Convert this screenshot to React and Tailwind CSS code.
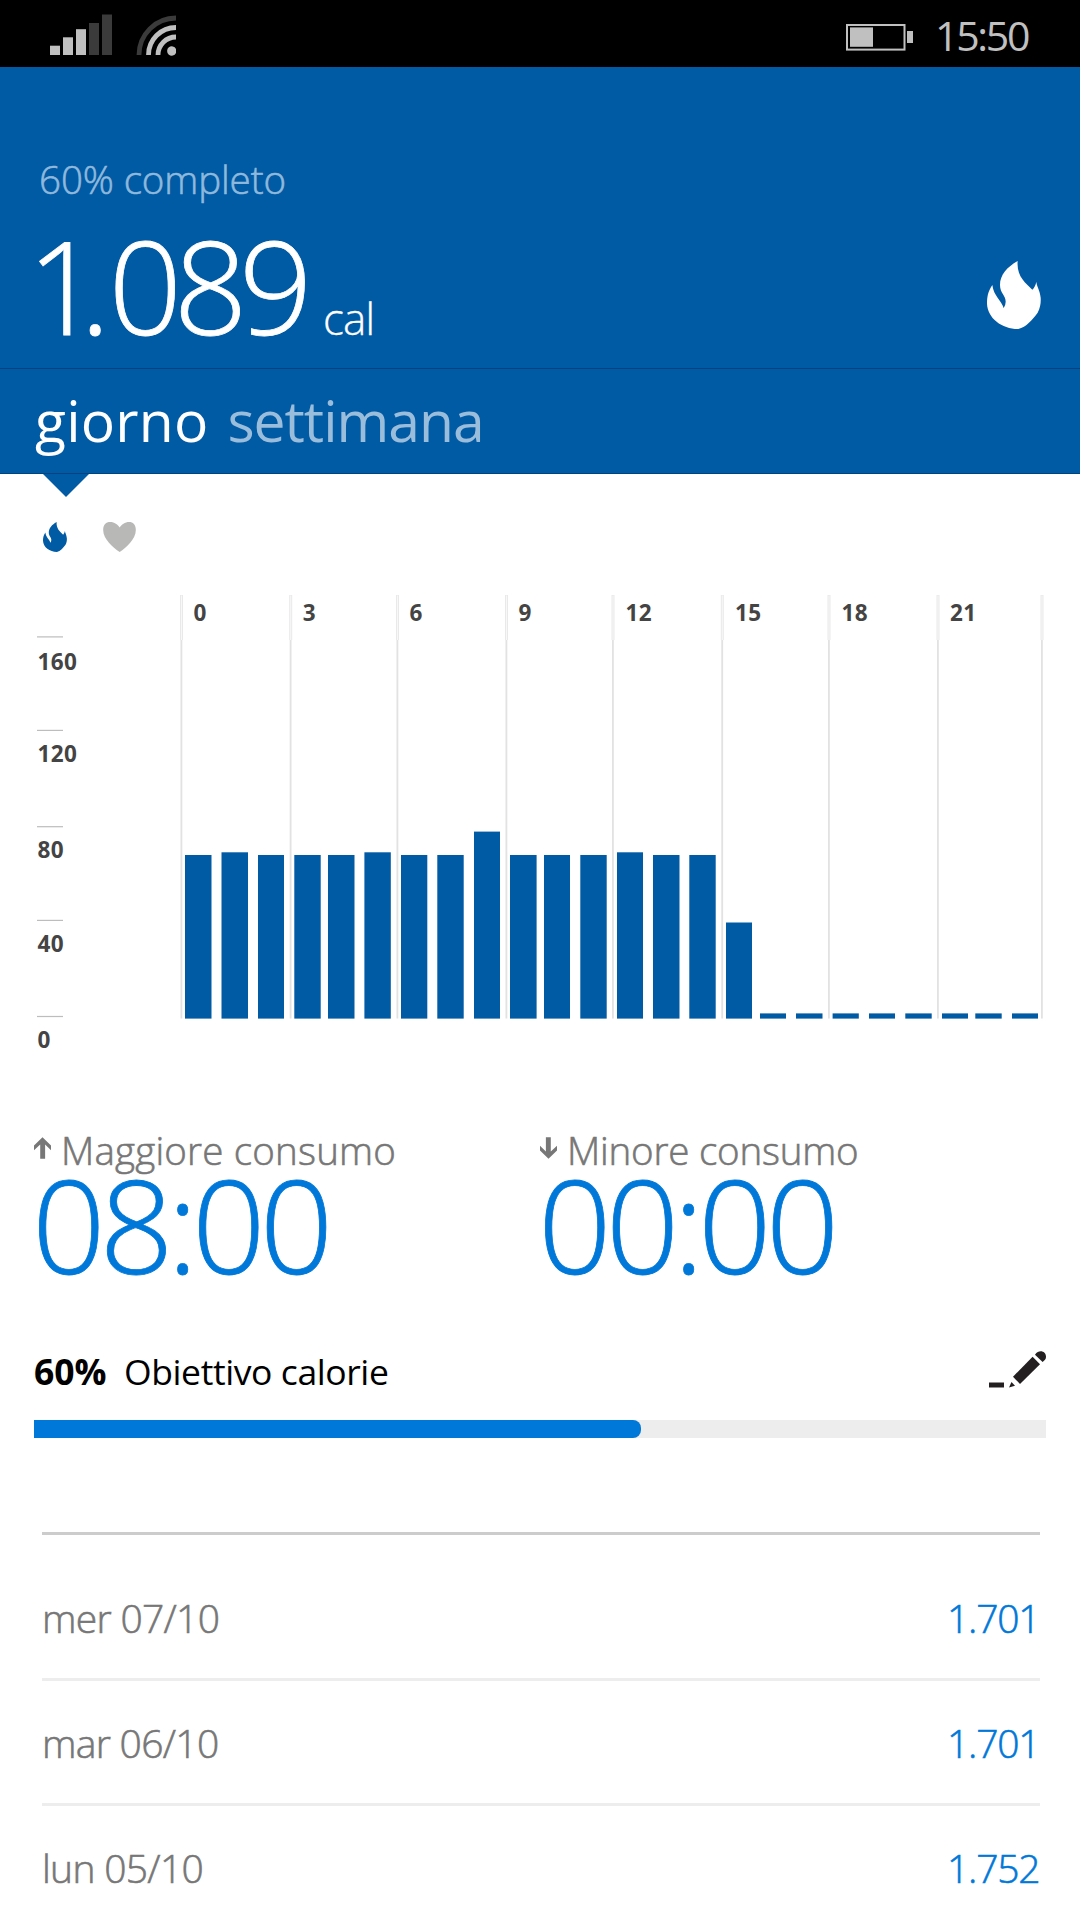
import React from "react";

const hours = [
  { x: 185, w: 26.5, top: 855 },
  { x: 221.5, w: 26.5, top: 852.3 },
  { x: 258, w: 26, top: 855 },
  { x: 294.3, w: 26.4, top: 855 },
  { x: 328, w: 26.5, top: 855 },
  { x: 364.4, w: 26.4, top: 852.3 },
  { x: 401, w: 26.3, top: 855 },
  { x: 437.3, w: 26.4, top: 855 },
  { x: 474, w: 26, top: 831.6 },
  { x: 510, w: 26.6, top: 855 },
  { x: 544, w: 26, top: 855 },
  { x: 580.3, w: 26.4, top: 855 },
  { x: 617, w: 26, top: 852.3 },
  { x: 653, w: 26.5, top: 855 },
  { x: 689.3, w: 26.4, top: 855 },
  { x: 726, w: 26, top: 922.5 },
  { x: 760, w: 26, top: 1013.4 },
  { x: 796, w: 26.5, top: 1013.4 },
  { x: 832.6, w: 26.2, top: 1013.4 },
  { x: 869, w: 26, top: 1013.4 },
  { x: 905.3, w: 26.4, top: 1013.4 },
  { x: 942, w: 26, top: 1013.4 },
  { x: 975.3, w: 26.4, top: 1013.4 },
  { x: 1012, w: 26, top: 1013.4 },
];

const gridLines = [
  { x: 180.5, label: "0", labelX: 193.5 },
  { x: 289.7, label: "3", labelX: 302.7 },
  { x: 396.5, label: "6", labelX: 409.5 },
  { x: 505.5, label: "9", labelX: 518.5 },
  { x: 612, label: "12", labelX: 625.5 },
  { x: 721.3, label: "15", labelX: 735 },
  { x: 828, label: "18", labelX: 841.5 },
  { x: 937, label: "21", labelX: 950 },
  { x: 1041, label: "", labelX: 1054 },
];

const ticks = [
  { label: "160", y: 636.8, baseline: 670 },
  { label: "120", y: 730.3, baseline: 762 },
  { label: "80", y: 826.6, baseline: 858 },
  { label: "40", y: 920.3, baseline: 952 },
  { label: "0", y: 1016.4, baseline: 1048 },
];

const history = [
  { day: "mer 07/10", value: "1.701" },
  { day: "mar 06/10", value: "1.701" },
  { day: "lun 05/10", value: "1.752" },
];

function Flame({ className }) {
  return (
    <svg
      viewBox="0 0 162 204"
      preserveAspectRatio="none"
      fill="currentColor"
      className={className}
    >
      <path d="M92 0C60 18 39 42 39 72C39 97 56 102 56 122Q56 132 50 141C43 118 20 105 16 72C2 92 0 110 0 128C2 172 45 204 94 204C118 198 136 176 152 155C160 140 162 125 161 110C159 88 149 76 148 62C146 72 142 80 136 86C115 65 88 45 92 0Z" />
    </svg>
  );
}

function Heart({ className }) {
  return (
    <svg viewBox="0 0 99 91" fill="currentColor" className={className}>
      <path d="M50 91C30 77 0 52 0 24C0 8 9 0 21 0C34 0 45 8 50 17C55 8 66 0 79 0C90 0 99 8 99 24C99 52 70 77 50 91Z" />
    </svg>
  );
}

function Arrow({ className }) {
  return (
    <svg viewBox="0 0 52 66" fill="currentColor" className={className}>
      <path d="M26 0L52 25V40L34 22V66H19V22L0 40V25Z" />
    </svg>
  );
}

function Pencil({ className }) {
  return (
    <svg viewBox="0 0 57 37" fill="currentColor" className={className}>
      <path d="M0 31.5H15V36.5H0Z" />
      <path d="M22.5 31L26 34.7L20 36.5Z" />
      <path d="M24 25.7L43.6 5.7L51 13.3L31 33Z" />
      <path d="M46 3.7C50-2 57 0 57 6C57 8 55.5 9.5 53.6 10.9Z" />
    </svg>
  );
}

function StatusBar() {
  return (
    <div className="flex h-[67px] items-start bg-black text-[#c0c0c0]">
      <svg width="130" height="67" className="ml-[50px]">
        <g fill="currentColor">
          <rect x="0" y="45.7" width="10" height="9.3" />
          <rect x="13" y="37.3" width="10" height="17.7" />
          <rect x="26" y="29.2" width="10" height="25.8" />
        </g>
        <g fill="#3b3b3b">
          <rect x="39" y="23" width="10" height="32" />
          <rect x="52" y="14.5" width="10" height="40.5" />
        </g>
        <g fill="none" strokeWidth="4.8">
          <path d="M89 55A37 37 0 0 1 126 18" stroke="#3b3b3b" />
          <path d="M98.5 55A27.5 27.5 0 0 1 126 27.5" stroke="currentColor" />
          <path d="M108 55A18 18 0 0 1 126 37" stroke="currentColor" />
        </g>
        <path
          d="M126 48.9A4.7 4.7 0 1 0 126 53.1Z"
          fill="currentColor"
        />
      </svg>
      <svg width="68" height="67" className="ml-auto">
        <rect
          x="1"
          y="25"
          width="57.5"
          height="24.6"
          fill="none"
          stroke="currentColor"
          strokeWidth="2"
        />
        <rect x="4" y="27.4" width="23" height="19.4" fill="currentColor" />
        <rect x="61" y="31" width="6" height="12" fill="currentColor" />
      </svg>
      <span className="mr-[52px] ml-[21px] w-[93px] text-[41px] leading-[71px] tracking-[-2.3px] whitespace-nowrap">
        15:50
      </span>
    </div>
  );
}

function Header() {
  return (
    <header className="bg-[#005aa4] text-white">
      <div className="flex h-[301px] justify-between">
        <div className="pl-[39px]">
          <p className="mt-[87px] text-[38.5px] leading-[50px] font-light tracking-[-0.1px] text-[#8fb9dc] [-webkit-text-stroke:0.6px_#8fb9dc]">
            60% completo
          </p>
          <p className="-ml-[12px] flex items-baseline pt-px whitespace-nowrap">
            <span className="w-[296px] text-[129px] leading-[160px] font-light tracking-[-8.3px] [-webkit-text-stroke:0.8px_white]">
              <span className="tracking-[-21px]">1</span>
              <span className="tracking-[-2px]">.</span>
              089
            </span>
            <span className="text-[44px] font-light tracking-[-1px] [-webkit-text-stroke:0.3px_white]">
              cal
            </span>
          </p>
        </div>
        <Flame className="mt-[194px] mr-[39px] h-[68px] w-[54px]" />
      </div>
      <nav className="flex h-[106px] gap-[19px] border-t border-b border-[#00447f] pl-[35px] text-[57px] leading-[103px]">
        <span className="tracking-[0.2px]">giorno</span>
        <span className="tracking-[-1px] text-[#99bddb]">settimana</span>
      </nav>
    </header>
  );
}

function CaloriesChart() {
  return (
    <svg
      viewBox="0 580 1080 480"
      className="h-[480px] w-full font-['Open_Sans',sans-serif] text-[22.5px] font-bold tracking-[0.4px]"
    >
      {gridLines.map((line) => (
        <g key={line.x}>
          <rect x={line.x - 0.5} y="595" width="3" height="45" fill="#e9e9e9" />
          <rect x={line.x + 0.5} y="595.5" width="1" height="44.5" fill="#f8f8f8" />
          <rect x={line.x} y="640" width="1.8" height="378.5" fill="#e2e2e2" />
          <text x={line.labelX} y="621" fill="#444">
            {line.label}
          </text>
        </g>
      ))}
      {ticks.map((tick) => (
        <g key={tick.label}>
          <rect x="37" y={tick.y - 0.5} width="26" height="1.2" fill="#bdbdbd" />
          <text x="37.4" y={tick.baseline} fill="#444">
            {tick.label}
          </text>
        </g>
      ))}
      {hours.map((bar) => (
        <rect
          key={bar.x}
          x={bar.x}
          y={bar.top}
          width={bar.w}
          height={1018.6 - bar.top}
          fill="#005aa4"
        />
      ))}
    </svg>
  );
}

function Peak({ label, time, down }) {
  return (
    <div className="w-[506px]">
      <div className="flex h-[50px] items-start">
        <Arrow
          className={`mt-[12px] h-[22px] w-[17px] text-[#777] ${down ? "rotate-180" : ""}`}
        />
        <span
          className={`ml-[10px] text-[38.5px] leading-[50px] font-light whitespace-nowrap text-[#777] [-webkit-text-stroke:0.6px_#777] ${down ? "tracking-[-0.2px]" : "tracking-[0.2px]"}`}
        >
          {label}
        </span>
      </div>
      <div className="-ml-[2px] h-[120px] text-[129px] leading-[98px] font-light tracking-[-6px] whitespace-nowrap text-[#0078d9] [-webkit-text-stroke:0.8px_#0078d9]">
        {time}
      </div>
    </div>
  );
}

function Goal() {
  return (
    <section className="px-[34px]">
      <div className="flex h-[85px] items-start text-[35.5px] leading-[73px] text-black">
        <span className="w-[90px] font-bold">60%</span>
        <span className="tracking-[-0.4px]">Obiettivo calorie</span>
        <Pencil className="mt-[16px] ml-auto h-[37px] w-[57px] text-[#231f20]" />
      </div>
      <div className="h-[18px] bg-[#ededed]">
        <div className="h-full w-3/5 rounded-r-[8px] bg-[#0078d9]" />
      </div>
    </section>
  );
}

function App() {
  return (
    <div className="h-[1920px] w-[1080px] overflow-hidden bg-white font-['Open_Sans',sans-serif]">
      <StatusBar />
      <Header />
      <main>
        <svg width="46" height="23" className="ml-[43px] text-[#005aa4]">
          <path d="M0 0H46L23 23Z" fill="currentColor" />
        </svg>
        <div className="flex h-[83px] items-start pt-[25px] pl-[43px]">
          <Flame className="h-[30px] w-[24px] text-[#005aa4]" />
          <Heart className="ml-[36px] h-[30px] w-[33px] text-[#b8b8b7]" />
        </div>
        <CaloriesChart />
        <section className="flex pt-[65px] pl-[34px]">
          <Peak label="Maggiore consumo" time="08:00" />
          <Peak label="Minore consumo" time="00:00" down />
        </section>
        <div className="h-[40px]" />
        <Goal />
        <ul className="mr-[40px] ml-[42px] mt-[94px] border-t-3 border-[#ccc] pt-[21px]">
          {history.map((item) => (
            <li
              key={item.day}
              className="flex h-[125px] items-center justify-between border-b-3 border-[#ededed] pt-[3px] text-[39px] font-light"
            >
              <span className="tracking-[-0.7px] text-[#777] [-webkit-text-stroke:0.6px_#777]">
                {item.day}
              </span>
              <span className="w-[93px] tracking-[-1.2px] text-[#0078d9] [-webkit-text-stroke:0.6px_#0078d9]">
                {item.value}
              </span>
            </li>
          ))}
        </ul>
      </main>
    </div>
  );
}

export default App;
